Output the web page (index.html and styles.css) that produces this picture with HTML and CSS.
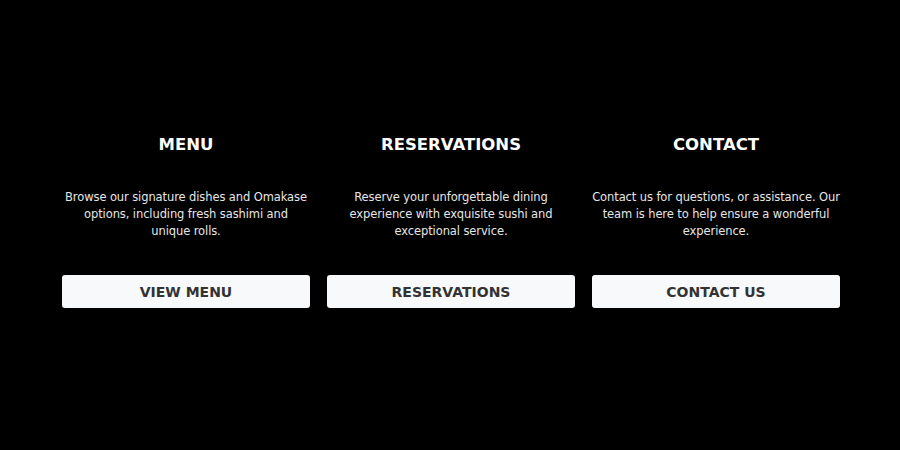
FILE: index.html
```html
<!DOCTYPE html>
<html>
<head>
<meta charset="utf-8">
<link rel="stylesheet" href="styles.css">
</head>
<body>
<section class="cards">
  <div class="card">
    <h2 class="title">MENU</h2>
    <p class="text">Browse our signature dishes and Omakase options, including fresh sashimi and<br>unique rolls.</p>
    <a class="btn">VIEW MENU</a>
  </div>
  <div class="card">
    <h2 class="title">RESERVATIONS</h2>
    <p class="text">Reserve your unforgettable dining experience with exquisite sushi and exceptional service.</p>
    <a class="btn">RESERVATIONS</a>
  </div>
  <div class="card">
    <h2 class="title">CONTACT</h2>
    <p class="text">Contact us for questions, or assistance. Our team is here to help ensure a wonderful experience.</p>
    <a class="btn">CONTACT US</a>
  </div>
</section>
</body>
</html>
```
FILE: styles.css
```css
html, body {
  margin: 0;
  padding: 0;
  background: #000;
  width: 900px;
  height: 450px;
  overflow: hidden;
}
body {
  font-family: "DejaVu Sans", sans-serif;
  color: #fff;
}
.cards {
  display: flex;
  gap: 17px;
  padding: 133px 0 0 62px;
}
.card {
  width: 248px;
  display: flex;
  flex-direction: column;
  align-items: center;
  text-align: center;
}
.title {
  margin: 0;
  font-size: 16.5px;
  line-height: 24px;
  font-weight: bold;
}
.text {
  margin: 32px 0 0;
  font-size: 11.5px;
  line-height: 17px;
  letter-spacing: -0.1px;
  color: #e6e6e6;
  width: 248px;
}
.btn {
  margin-top: 35px;
  width: 248px;
  height: 33px;
  box-sizing: border-box;
  background: #f8f9fa;
  border-radius: 3px;
  color: #333;
  font-size: 14px;
  font-weight: bold;
  display: flex;
  align-items: center;
  justify-content: center;
}
```
